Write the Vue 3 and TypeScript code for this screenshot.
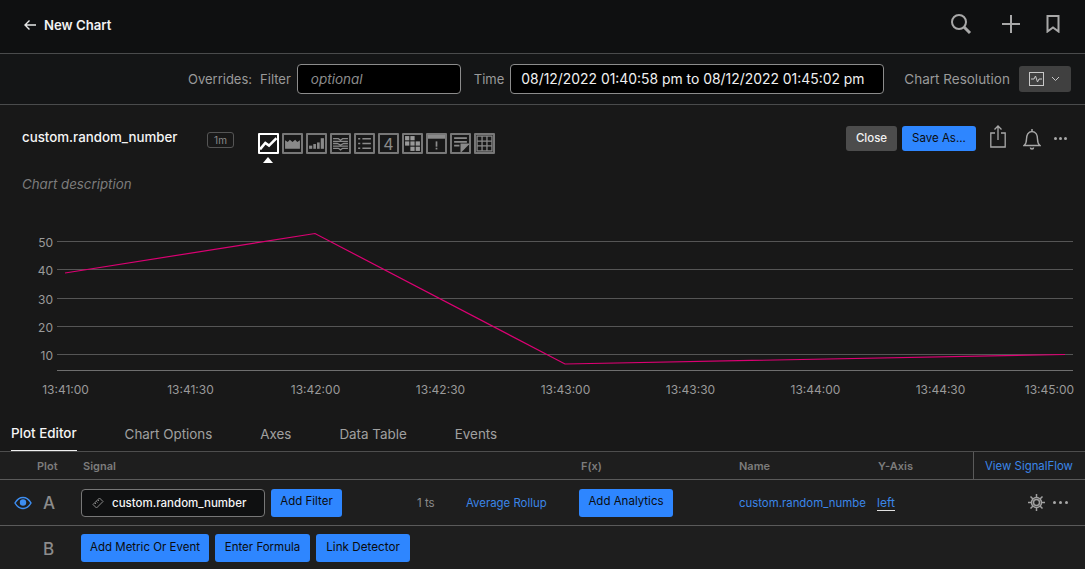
<template>
  <div class="page">
    <header class="topbar">
      <div class="back">
        <svg width="14" height="12" viewBox="0 0 14 12" fill="none" stroke="#e8e8e8" stroke-width="1.4"><path d="M13 6H2M6.5 1.5 2 6l4.5 4.5" /></svg>
        <span>New Chart</span>
      </div>
      <div class="top-icons">
        <svg width="22" height="22" viewBox="0 0 22 22" fill="none" stroke="#a8a8a8"><circle cx="9" cy="9" r="7" stroke-width="2" /><path d="m14 14 6 6" stroke-width="3" /></svg>
        <svg class="plus" width="20" height="20" viewBox="0 0 20 20" fill="none" stroke="#a8a8a8" stroke-width="2"><path d="M10 1v18M1 10h18" /></svg>
        <svg class="mark" width="14" height="18" viewBox="0 0 14 18" fill="none" stroke="#a8a8a8" stroke-width="2"><path d="M1.5 1h11v15.500L7 12.500l-5.500 4z" /></svg>
      </div>
    </header>

    <section class="overrides">
      <span class="lbl">Overrides:</span>
      <span class="lbl filter-lbl">Filter</span>
      <div class="field filter-field"><i>optional</i></div>
      <span class="lbl time-lbl">Time</span>
      <div class="field time-field">08/12/2022 01:40:58 pm to 08/12/2022 01:45:02 pm</div>
      <span class="lbl res-lbl">Chart Resolution</span>
      <div class="res-btn">
        <svg width="15" height="14" viewBox="0 0 15 14" fill="none" stroke="#c8c8c8"><rect x="0.500" y="0.500" width="14" height="13" /><path d="M2 7h3l1.500-3 2 6L10 7h3" /></svg>
        <svg width="9" height="6" viewBox="0 0 9 6" fill="none" stroke="#c8c8c8"><path d="m1 1 3.500 3.500L8 1" /></svg>
      </div>
    </section>

    <section class="chart-head">
      <div class="title-row">
        <div class="title">custom.random_number</div>
        <div class="res-tag">1m</div>
        <div class="viz-icons">
          <div class="viz active">
            <svg viewBox="0 0 16 16" fill="none" stroke="#fff" stroke-width="2.400"><path d="M0 13.500 5 7.500 8.500 10 15.500 3" /></svg>
          </div>
          <div class="viz">
            <svg viewBox="0 0 16 16" fill="#8a8a8a"><path d="M1 13V5l2.500 1.500 2-2 2.500 2 2.500-2 2 2 2.500-1.500V13z" /></svg>
          </div>
          <div class="viz">
            <svg viewBox="0 0 16 16" fill="#8a8a8a"><rect x="1" y="10" width="3" height="3" /><rect x="5" y="8.500" width="2.500" height="4.500" /><rect x="8.500" y="7" width="2.500" height="6" /><rect x="12" y="3" width="3" height="10" /></svg>
          </div>
          <div class="viz">
            <svg viewBox="0 0 16 16" fill="none" stroke="#8a8a8a" stroke-width="1.200"><path d="M1 3.500h5l2 1.500 2-1.500h5M1 8h4l3 1.500 3-1.500h4M1 12.500h5l2 1.500 2-1.500h5M1 6h14M1 10.500h14" /></svg>
          </div>
          <div class="viz">
            <svg viewBox="0 0 16 16" fill="none" stroke="#8a8a8a" stroke-width="1.500"><path d="M2 3.500h2M6 3.500h8M2 8h2M6 8h8M2 12.500h2M6 12.500h8" /></svg>
          </div>
          <div class="viz num">4</div>
          <div class="viz">
            <svg viewBox="0 0 16 16" fill="#9a9a9a"><rect x="1" y="1" width="4" height="4" /><rect x="6" y="1" width="4" height="4" /><rect x="1" y="6" width="4" height="4" /><rect x="6" y="6" width="4" height="4" /><rect x="11" y="6" width="4" height="4" /><rect x="6" y="11" width="4" height="4" /><rect x="11" y="11" width="4" height="4" /></svg>
          </div>
          <div class="viz">
            <svg viewBox="0 0 16 16" fill="#8a8a8a"><rect x="-1" y="-1" width="18" height="4.500" /><rect x="7.200" y="6" width="1.600" height="5" /><rect x="7.200" y="12" width="1.600" height="1.600" /></svg>
          </div>
          <div class="viz">
            <svg viewBox="0 0 16 16" fill="none" stroke="#8a8a8a" stroke-width="1.600"><path d="M2 3h12M2 6.500h12M2 10h5" /><path d="M17 8H8v9z" fill="#8a8a8a" stroke="none" /></svg>
          </div>
          <div class="viz">
            <svg viewBox="0 0 16 16" fill="none" stroke="#8a8a8a" stroke-width="1.200"><rect x="1" y="1" width="14" height="14" /><path d="M1 5.700h14M1 10.300h14M5.700 1v14M10.300 1v14" /></svg>
          </div>
        </div>
        <div class="head-actions">
          <button class="btn grey">Close</button>
          <button class="btn blue save">Save As...</button>
          <svg class="share" width="16" height="23" viewBox="0 0 16 23" fill="none" stroke="#a8a8a8" stroke-width="1.300"><path d="M5 8H.8v14h14.400V8H11M8 15V1M4.500 4.500 8 1l3.500 3.500" /></svg>
          <svg class="bell" width="18" height="21" viewBox="0 0 18 21" fill="none" stroke="#a8a8a8" stroke-width="1.400"><path d="M1 16.500c2-1.500 2.500-3 2.500-6.500S5 2.500 9 2.500s5.500 4 5.500 7.500.5 5 2.500 6.500z" /><path d="M8 1h2M7.500 18.500a1.500 1.500 0 0 0 3 0" stroke-width="1.600" /></svg>
          <div class="dots"><i></i><i></i><i></i></div>
        </div>
      </div>
      <div class="desc">Chart description</div>
    </section>

    <svg class="chart" width="1085" height="212" viewBox="0 196 1085 212">
      <g v-for="t in yTicks" :key="t.label">
        <line x1="57" x2="1073" :y1="t.y" :y2="t.y" stroke="#555" />
        <text x="53" :y="t.y + 5" text-anchor="end" class="tick">{{ t.label }}</text>
      </g>
      <line x1="57" x2="1073" y1="370.500" y2="370.500" stroke="#6e6e6e" />
      <polyline points="65,273 315,233.500 565,364 1065,354.500" fill="none" stroke="#dc0073" stroke-width="1.200" />
      <text v-for="t in xTicks" :key="t.label" :x="t.x" y="394" text-anchor="middle" class="tick">{{ t.label }}</text>
    </svg>

    <nav class="tabs">
      <div v-for="tab in tabs" :key="tab" :class="['tab', { active: tab === 'Plot Editor' }]">{{ tab }}</div>
    </nav>

    <section class="plots">
      <div class="plot-row head-row">
        <div class="c-plot">Plot</div>
        <div class="c-signal">Signal</div>
        <div class="c-fx">F(x)</div>
        <div class="c-name">Name</div>
        <div class="c-axis">Y-Axis</div>
        <div class="c-flow">View SignalFlow</div>
      </div>
      <div class="plot-row a-row">
        <svg class="eye" width="18" height="14" viewBox="0 0 18 14" fill="none" stroke="#3d8ef2" stroke-width="1.500"><path d="M1 7c2-3.500 5-5.500 8-5.500s6 2 8 5.500c-2 3.500-5 5.500-8 5.500S3 10.500 1 7z" /><circle cx="9" cy="6.500" r="3.200" fill="#3d8ef2" stroke="none" /></svg>
        <div class="letter">A</div>
        <div class="metric">
          <svg width="12" height="12" viewBox="0 0 12 12" fill="none" stroke="#8a8a8a"><path d="M7.500 1 11 4.500 4.500 11 1 7.500zM6 3l1 1M4.500 4.500l1 1M3 6l1 1" /></svg>
          <span>custom.random_number</span>
        </div>
        <button class="btn blue filter-btn">Add Filter</button>
        <div class="ts">1 ts</div>
        <div class="link rollup">Average Rollup</div>
        <button class="btn blue analytics">Add Analytics</button>
        <div class="link plot-name">custom.random_number</div>
        <div class="link axis-link">left</div>
        <svg class="gear" width="17" height="17" viewBox="0 0 17 17" fill="none" stroke="#a0a0a0"><circle cx="8.500" cy="8.500" r="3" stroke-width="1.500" /><circle cx="8.500" cy="8.500" r="5" stroke-width="1.500" /><path d="M8.500 0v3.500M8.500 13.500V17M0 8.500h3.500M13.500 8.500H17M2.500 2.500 5 5M12 12l2.500 2.500M14.500 2.500 12 5M5 12l-2.500 2.500" stroke-width="1.500" /></svg>
        <div class="dots row-dots"><i></i><i></i><i></i></div>
      </div>
      <div class="plot-row b-row">
        <div class="letter">B</div>
        <button class="btn blue add-metric">Add Metric Or Event</button>
        <button class="btn blue add-formula">Enter Formula</button>
        <button class="btn blue add-detector">Link Detector</button>
      </div>
    </section>
  </div>
</template>

<script setup lang="ts">
const yTicks = [
  { label: '50', y: 241.5 },
  { label: '40', y: 269.5 },
  { label: '30', y: 298.5 },
  { label: '20', y: 326.5 },
  { label: '10', y: 354.5 },
]

const xLabels = ['13:41:00', '13:41:30', '13:42:00', '13:42:30', '13:43:00', '13:43:30', '13:44:00', '13:44:30', '13:45:00']
// last label is pulled in so it stays inside the plot area
const xTicks = xLabels.map((label, i) => ({ label, x: i === 8 ? 1049.5 : 65.5 + i * 125 }))

const tabs = ['Plot Editor', 'Chart Options', 'Axes', 'Data Table', 'Events']
</script>

<style>
html,
body {
  margin: 0;
  background: #181818;
  overflow: hidden;
}
</style>

<style scoped>
.page {
  width: 1085px;
  height: 569px;
  overflow: hidden;
  font-family: Inter, "Liberation Sans", sans-serif;
  font-size: 12px;
  color: #e8e8e8;
  background: #181818;
}

.topbar {
  height: 53px;
  box-sizing: content-box;
  background: #0f1011;
  border-bottom: 1px solid #4a4b4c;
  display: flex;
  align-items: center;
  justify-content: space-between;
  padding: 0 25px 0 23px;
}

.back {
  display: flex;
  align-items: center;
  gap: 7px;
  margin-top: -4px;
  font-size: 13.200px;
  font-weight: 600;
  color: #f2f2f2;
}

.top-icons {
  display: flex;
  align-items: center;
  margin-top: -5px;
}

.plus {
  margin-left: 29px;
}

.mark {
  margin-left: 25px;
}

.overrides {
  height: 50px;
  background: #141516;
  border-bottom: 1px solid #4a4b4c;
  display: flex;
  align-items: center;
  padding-left: 188px;
}

.lbl {
  color: #9a9a9a;
  font-size: 13px;
  white-space: nowrap;
}

.filter-lbl {
  margin-left: 8px;
  margin-right: 6px;
}

.field {
  height: 30px;
  box-sizing: border-box;
  background: #000;
  border: 1px solid #8c8c8c;
  border-radius: 4px;
  display: flex;
  align-items: center;
  padding-left: 13px;
  font-size: 13.500px;
  white-space: nowrap;
}

.filter-field {
  width: 164px;
  color: #8c8c8c;
}

.time-lbl {
  margin-left: 13px;
  margin-right: 6px;
}

.time-field {
  width: 374px;
  padding-left: 10px;
  font-size: 13.900px;
  color: #f0f0f0;
}

.res-lbl {
  margin-left: 20px;
  font-size: 13.500px;
}

.res-btn {
  width: 52px;
  height: 26px;
  margin-left: 9px;
  background: #404040;
  border-radius: 3px;
  display: flex;
  align-items: center;
  justify-content: center;
  gap: 7px;
}

.chart-head {
  height: 91px;
  padding: 0 0 0 22px;
}

.title-row {
  display: flex;
  align-items: flex-start;
  height: 71px;
}

.title {
  width: 185px;
  padding-top: 24px;
  font-size: 13.300px;
  font-weight: 500;
  color: #f5f5f5;
}

.res-tag {
  width: 25px;
  height: 14px;
  margin-top: 27px;
  border: 1px solid #555;
  border-radius: 3px;
  text-align: center;
  font-size: 10px;
  line-height: 14px;
  color: #8a8a8a;
}

.viz-icons {
  display: flex;
  gap: 3px;
  margin-left: 24px;
  margin-top: 28px;
}

.viz {
  position: relative;
  width: 21px;
  height: 21px;
  box-sizing: border-box;
  border: 2px solid #777;
  border-radius: 1px;
  display: flex;
  align-items: center;
  justify-content: center;
  color: #8a8a8a;
}

.viz svg {
  width: 17px;
  height: 17px;
  flex: none;
  overflow: hidden;
}

.viz.active {
  border-color: #fff;
}

.viz.active::after {
  content: "";
  position: absolute;
  top: 22px;
  left: 3px;
  border-left: 5.500px solid transparent;
  border-right: 5.500px solid transparent;
  border-bottom: 6px solid #fff;
}

.viz.num {
  font-size: 16px;
  line-height: 1;
}

.head-actions {
  margin-left: auto;
  display: flex;
  align-items: center;
  height: 30px;
  margin-top: 18px;
  padding-right: 18px;
}

.btn {
  height: 25px;
  border: none;
  border-radius: 3px;
  font-family: inherit;
  font-size: 11.500px;
  padding: 0 10px;
  white-space: nowrap;
}

.btn.grey {
  width: 51px;
  padding: 0;
  background: #4c4c4c;
  color: #f2f2f2;
  font-weight: 500;
}

.btn.blue {
  background: #2e86ff;
  color: #0b0c0e;
}

.save {
  width: 74px;
  padding: 0;
  margin-left: 5px;
}

.share {
  margin-left: 14px;
  margin-top: -4px;
}

.bell {
  margin-left: 17px;
  margin-top: 2px;
}

.dots {
  display: flex;
  gap: 2px;
  margin-left: 13px;
}

.dots i {
  width: 3px;
  height: 3px;
  border-radius: 50%;
  background: #a8a8a8;
}

.desc {
  font-size: 13.300px;
  font-style: italic;
  color: #7c7c7c;
}

.chart {
  display: block;
}

.tick {
  font-size: 12px;
  fill: #9a9a9a;
  font-family: Inter, "Liberation Sans", sans-serif;
}

.tabs {
  height: 43px;
  display: flex;
  align-items: flex-end;
  padding-left: 11px;
  box-sizing: border-box;
}

.tab {
  height: 31px;
  margin-right: 48px;
  font-size: 13.400px;
  color: #a0a0a0;
  line-height: 28px;
  box-sizing: border-box;
}

.tab.active {
  color: #f5f5f5;
  font-weight: 500;
  border-bottom: 1px solid #f0f0f0;
  line-height: 26px;
}

.plots {
  background: #1e1e1e;
  border-top: 1px solid #4e4e4e;
  height: 118px;
}

.plot-row {
  display: flex;
  align-items: center;
  box-sizing: border-box;
}

.head-row {
  height: 28px;
  border-bottom: 1px solid #5a5a5a;
  font-size: 11px;
  font-weight: 600;
  color: #7c7c7c;
}

.head-row > div {
  height: 100%;
  line-height: 28px;
}

.c-plot {
  width: 46px;
  margin-left: 37px;
}

.c-signal {
  width: 498px;
}

.c-fx {
  width: 158px;
}

.c-name {
  width: 139px;
}

.c-axis {
  width: 95px;
}

.c-flow {
  border-left: 1px solid #5a5a5a;
  padding-left: 11px;
  font-size: 11.400px;
  font-weight: 400;
  color: #3b86e8;
  white-space: nowrap;
}

.a-row {
  height: 46px;
  border-bottom: 1px solid #5a5a5a;
}

.eye {
  margin-left: 14px;
  flex: none;
}

.letter {
  font-size: 17px;
  font-weight: 500;
  color: #8c8c8c;
  margin-left: 11px;
  width: 18px;
}

.metric {
  width: 184px;
  height: 28px;
  box-sizing: border-box;
  margin-left: 20px;
  background: #0f1011;
  border: 1px solid #777;
  border-radius: 4px;
  display: flex;
  align-items: center;
  gap: 8px;
  padding-left: 10px;
  font-size: 11.500px;
  font-weight: 500;
  color: #f5f5f5;
  white-space: nowrap;
}

.filter-btn {
  width: 71px;
  height: 28px;
  padding: 0 0 3px;
  margin-left: 6px;
}

.ts {
  margin-left: 75px;
  width: 49px;
  font-size: 11.500px;
  color: #8c8c8c;
}

.link {
  color: #3b86e8;
  font-size: 11.400px;
}

.rollup {
  width: 113px;
  white-space: nowrap;
}

.analytics {
  width: 94px;
  height: 28px;
  padding: 0 0 3px;
}

.plot-name {
  width: 127px;
  margin-left: 66px;
  overflow: hidden;
  white-space: nowrap;
}

.axis-link {
  margin-left: 11px;
  font-size: 12px;
  border-bottom: 1px solid #e0e0e0;
  line-height: 15px;
}

.gear {
  margin-left: auto;
}

.row-dots {
  gap: 2.500px;
  margin-left: 8px;
  margin-right: 17px;
}

.row-dots i {
  width: 3.500px;
  height: 3.500px;
}

.b-row {
  height: 43px;
  gap: 6px;
}

.b-row .letter {
  margin-left: 43px;
  margin-right: 14px;
  width: 18px;
  padding-top: 2px;
}

.b-row .btn {
  height: 28px;
  padding: 0 0 2px;
}

.add-metric {
  width: 128px;
}

.add-formula {
  width: 95px;
}

.add-detector {
  width: 94px;
  font-size: 11.700px;
}
</style>
